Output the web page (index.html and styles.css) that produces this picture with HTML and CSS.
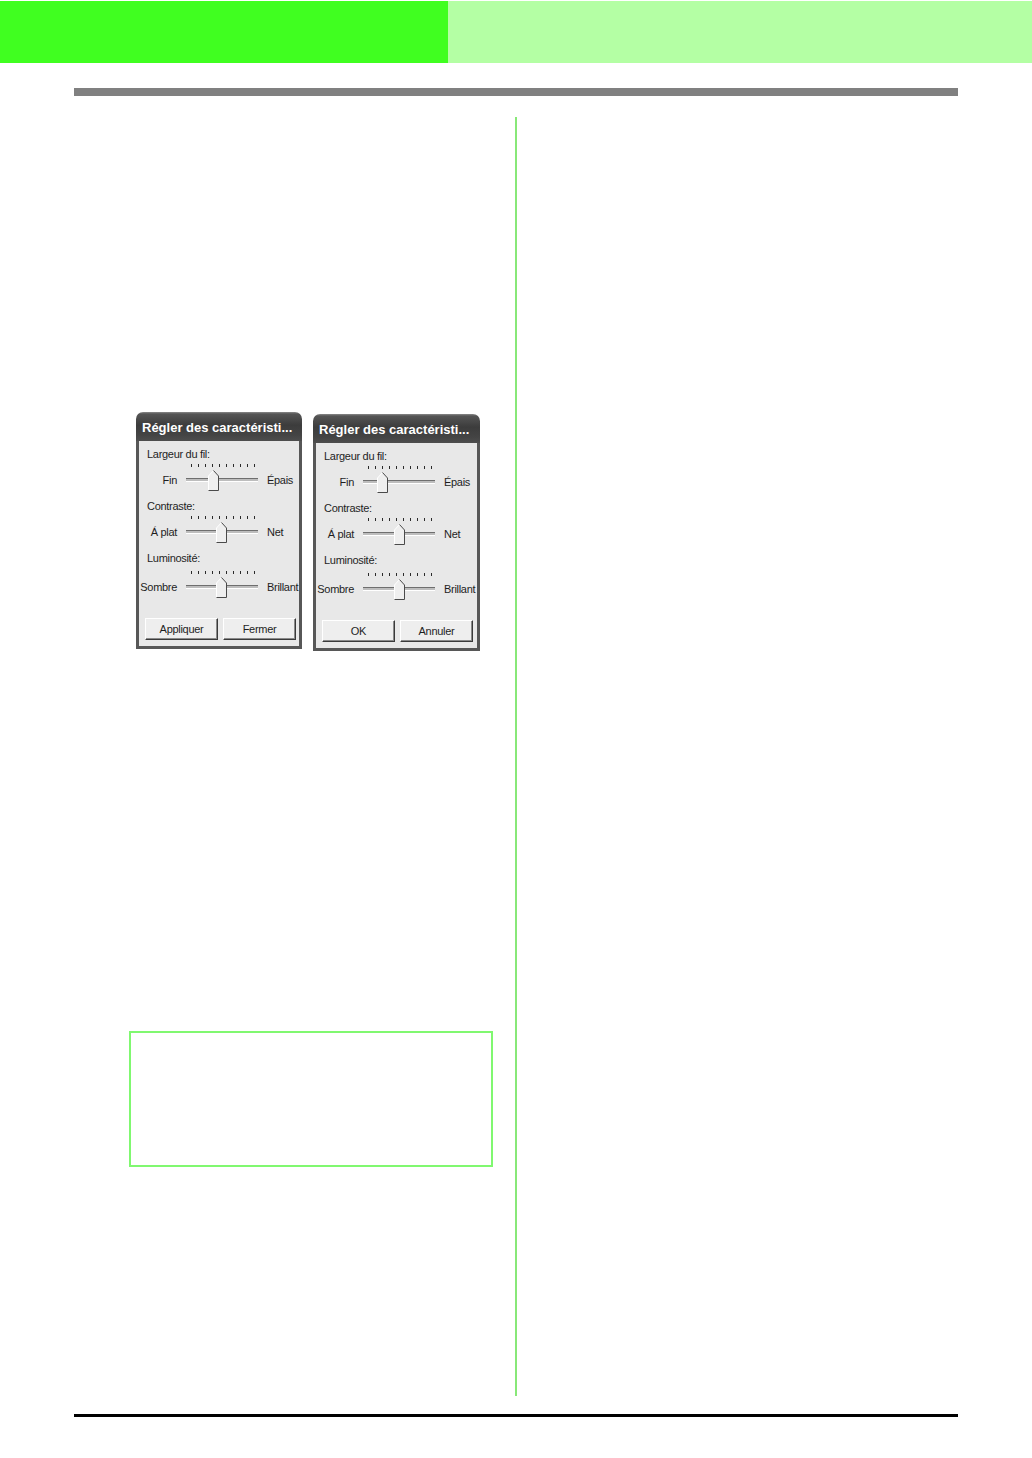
FILE: index.html
```html
<!DOCTYPE html>
<html lang="fr">
<head>
<meta charset="utf-8">
<title>Régler des caractéristiques</title>
<link rel="stylesheet" href="styles.css">
</head>
<body>
<div class="header"><div class="hdr-left"></div><div class="hdr-right"></div></div>
<div class="page">
  <div class="rule"></div>
  <div class="columns">
    <div class="col-left">
      <div class="dialogs">
        <div class="dlg">
          <div class="dlg-title">Régler des caractéristi...</div>
          <div class="dlg-body">
            <div class="group">
              <div class="lbl">Largeur du fil:</div>
              <div class="ticks"></div>
              <div class="srow"><span class="lft">Fin</span><div class="track"><svg class="thumb" style="left:22px" width="11" height="21" viewBox="0 0 11 21"><polygon points="0.5,6 5.5,0.5 10.5,6 10.5,20.5 0.5,20.5" fill="#efefef"/><polyline points="0.5,20.5 0.5,6 5.5,0.5" fill="none" stroke="#fff"/><polyline points="5.5,0.5 10.5,6 10.5,20.5 0.5,20.5" fill="none" stroke="#4a4a4a"/></svg></div><span class="rgt">Épais</span></div>
            </div>
            <div class="group">
              <div class="lbl">Contraste:</div>
              <div class="ticks"></div>
              <div class="srow"><span class="lft">Á plat</span><div class="track"><svg class="thumb" style="left:30px" width="11" height="21" viewBox="0 0 11 21"><polygon points="0.5,6 5.5,0.5 10.5,6 10.5,20.5 0.5,20.5" fill="#efefef"/><polyline points="0.5,20.5 0.5,6 5.5,0.5" fill="none" stroke="#fff"/><polyline points="5.5,0.5 10.5,6 10.5,20.5 0.5,20.5" fill="none" stroke="#4a4a4a"/></svg></div><span class="rgt">Net</span></div>
            </div>
            <div class="group group-last">
              <div class="lbl">Luminosité:</div>
              <div class="ticks"></div>
              <div class="srow"><span class="lft">Sombre</span><div class="track"><svg class="thumb" style="left:30px" width="11" height="21" viewBox="0 0 11 21"><polygon points="0.5,6 5.5,0.5 10.5,6 10.5,20.5 0.5,20.5" fill="#efefef"/><polyline points="0.5,20.5 0.5,6 5.5,0.5" fill="none" stroke="#fff"/><polyline points="5.5,0.5 10.5,6 10.5,20.5 0.5,20.5" fill="none" stroke="#4a4a4a"/></svg></div><span class="rgt">Brillant</span></div>
            </div>
            <div class="buttons"><button class="btn">Appliquer</button><button class="btn">Fermer</button></div>
          </div>
        </div>
        <div class="dlg dlg-second">
          <div class="dlg-title">Régler des caractéristi...</div>
          <div class="dlg-body">
            <div class="group">
              <div class="lbl">Largeur du fil:</div>
              <div class="ticks"></div>
              <div class="srow"><span class="lft">Fin</span><div class="track"><svg class="thumb" style="left:14px" width="11" height="21" viewBox="0 0 11 21"><polygon points="0.5,6 5.5,0.5 10.5,6 10.5,20.5 0.5,20.5" fill="#efefef"/><polyline points="0.5,20.5 0.5,6 5.5,0.5" fill="none" stroke="#fff"/><polyline points="5.5,0.5 10.5,6 10.5,20.5 0.5,20.5" fill="none" stroke="#4a4a4a"/></svg></div><span class="rgt">Épais</span></div>
            </div>
            <div class="group">
              <div class="lbl">Contraste:</div>
              <div class="ticks"></div>
              <div class="srow"><span class="lft">Á plat</span><div class="track"><svg class="thumb" style="left:31px" width="11" height="21" viewBox="0 0 11 21"><polygon points="0.5,6 5.5,0.5 10.5,6 10.5,20.5 0.5,20.5" fill="#efefef"/><polyline points="0.5,20.5 0.5,6 5.5,0.5" fill="none" stroke="#fff"/><polyline points="5.5,0.5 10.5,6 10.5,20.5 0.5,20.5" fill="none" stroke="#4a4a4a"/></svg></div><span class="rgt">Net</span></div>
            </div>
            <div class="group group-last">
              <div class="lbl">Luminosité:</div>
              <div class="ticks"></div>
              <div class="srow"><span class="lft">Sombre</span><div class="track"><svg class="thumb" style="left:31px" width="11" height="21" viewBox="0 0 11 21"><polygon points="0.5,6 5.5,0.5 10.5,6 10.5,20.5 0.5,20.5" fill="#efefef"/><polyline points="0.5,20.5 0.5,6 5.5,0.5" fill="none" stroke="#fff"/><polyline points="5.5,0.5 10.5,6 10.5,20.5 0.5,20.5" fill="none" stroke="#4a4a4a"/></svg></div><span class="rgt">Brillant</span></div>
            </div>
            <div class="buttons"><button class="btn">OK</button><button class="btn">Annuler</button></div>
          </div>
        </div>
      </div>
      <div class="note"></div>
    </div>
    <div class="col-right"></div>
  </div>
  <div class="footer-rule"></div>
</div>
</body>
</html>
```
FILE: styles.css
```css
* { box-sizing: border-box; }
html, body { margin: 0; padding: 0; background: #fff; }
body { font-family: "Liberation Sans", Arial, sans-serif; }

.header { display: flex; height: 62px; margin-top: 1px; }
.hdr-left { width: 448px; background: #40ff20; }
.hdr-right { flex: 1; background: #b4ffa4; }

.page { margin-left: 74px; width: 884px; }
.rule { margin-top: 25px; height: 8px; background: #808080; }

.columns { display: flex; margin-top: 21px; height: 1279px; }
.col-left { width: 443px; border-right: 2px solid #88e878; }
.col-right { flex: 1; }

.dialogs { display: flex; align-items: flex-start; gap: 11px; margin-top: 295px; margin-left: 62px; }
.dlg { width: 166px; }
.dlg-second { width: 167px; margin-top: 2px; }

.dlg-title {
  height: 29px;
  padding: 3px 0 0 6px;
  line-height: 26px;
  border-radius: 7px 7px 0 0;
  background: linear-gradient(to bottom, #8a8a8a 0, #555 2px, #3c3c3c 45%, #444 80%, #4e4e4e 100%);
  color: #fff;
  font-weight: bold;
  font-size: 13px;
  white-space: nowrap;
  overflow: hidden;
}
.dlg-body {
  background: #e8e8e8;
  border: 3px solid #575757;
  border-top: 0;
  padding: 6px 0 6px 0;
  color: #1e1e1e;
  font-size: 11px;
  letter-spacing: -0.3px;
}
.group { height: 44px; margin-bottom: 8px; }
.group-last { height: 47px; margin-bottom: 0; }
.group-last .lbl { height: 17px; }
.lbl { height: 14px; line-height: 14px; padding-left: 8px; white-space: nowrap; }
.ticks {
  height: 8px;
  margin-left: 52px;
  width: 64px;
  background: repeating-linear-gradient(to right, #2a2a2a 0, #2a2a2a 1px, transparent 1px, transparent 7px) 0 3px / 64px 3px no-repeat;
}
.srow { height: 22px; display: flex; align-items: center; white-space: nowrap; }
.lft { width: 38px; text-align: right; flex: none; }
.track {
  position: relative;
  width: 72px;
  height: 4px;
  margin-left: 9px;
  flex: none;
  border-top: 1px solid #6e6e6e;
  border-bottom: 1px solid #fff;
  background: #bdbdbd;
}
.thumb { position: absolute; top: -9px; display: block; }
.rgt { margin-left: 9px; }

.buttons { display: flex; gap: 5px; padding-left: 6px; margin-top: 20px; }
.btn {
  width: 73px;
  height: 22px;
  padding: 0;
  font-family: "Liberation Sans", Arial, sans-serif;
  font-size: 11px;
  letter-spacing: -0.3px;
  color: #1e1e1e;
  background: #eeeeee;
  border: 1px solid;
  border-color: #fff #3a3a3a #3a3a3a #fff;
  box-shadow: inset -1px -1px 0 #8a8a8a;
}

.note {
  margin-top: 380px;
  margin-left: 55px;
  width: 364px;
  height: 136px;
  border: 2px solid #80f870;
}

.footer-rule { margin-top: 18px; height: 3px; background: #000; }
```
